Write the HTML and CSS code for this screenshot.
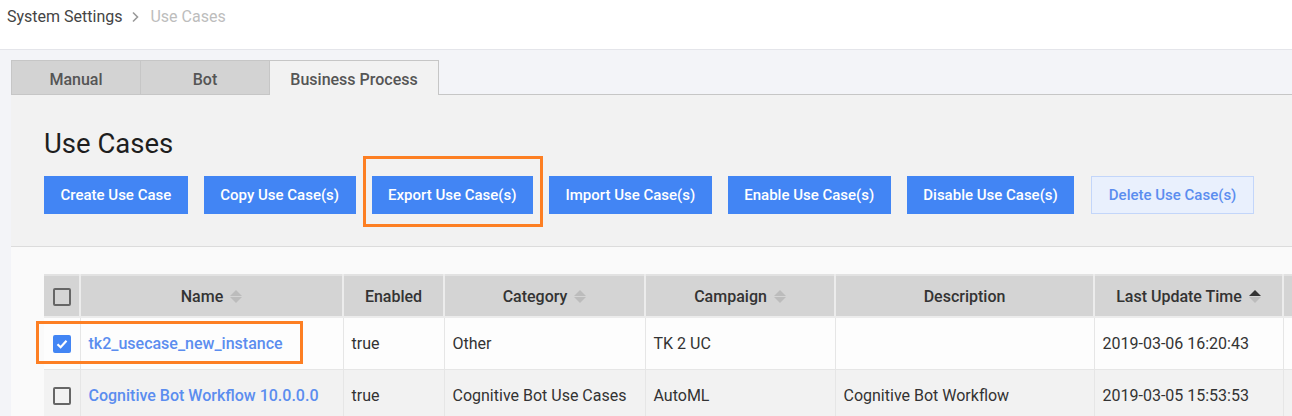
FILE: index.html
```html
<!DOCTYPE html>
<html lang="en">
<head>
    <meta charset="UTF-8">
    <meta name="viewport" content="width=device-width, initial-scale=1.0">
    <title>Use Cases</title>
    <link rel="stylesheet" href="styles.css">
</head>
<body>
    <div class="topbar">
        <span class="crumb">System Settings</span>
        <svg class="crumb-sep" width="10" height="12" viewBox="0 0 10 12"><path d="M3 1.5 L7.5 6 L3 10.5" fill="none" stroke="#9a9a9a" stroke-width="1.6"/></svg>
        <span class="crumb current">Use Cases</span>
    </div>

    <div class="main">
        <ul class="tabs">
            <li class="tab tab-manual">Manual</li>
            <li class="tab tab-bot">Bot</li>
            <li class="tab active">Business Process</li>
        </ul>

        <div class="panel">
            <div class="panel-head">
                <h2>Use Cases</h2>
                <div class="actions">
                    <button class="btn">Create Use Case</button>
                    <button class="btn">Copy Use Case(s)</button>
                    <span class="marked"><button class="btn">Export Use Case(s)</button></span>
                    <button class="btn">Import Use Case(s)</button>
                    <button class="btn">Enable Use Case(s)</button>
                    <button class="btn">Disable Use Case(s)</button>
                    <button class="btn btn-light">Delete Use Case(s)</button>
                </div>
            </div>

            <div class="panel-body">
                <div class="table-wrap">
                    <table class="grid">
                        <colgroup>
                            <col style="width:36px">
                            <col style="width:263px">
                            <col style="width:101px">
                            <col style="width:201px">
                            <col style="width:190px">
                            <col style="width:259px">
                            <col style="width:189px">
                            <col style="width:120px">
                        </colgroup>
                        <thead>
                            <tr>
                                <th><span class="check"></span></th>
                                <th>Name <span class="sort"><i class="up"></i><i class="down"></i></span></th>
                                <th>Enabled</th>
                                <th>Category <span class="sort"><i class="up"></i><i class="down"></i></span></th>
                                <th>Campaign <span class="sort"><i class="up"></i><i class="down"></i></span></th>
                                <th>Description</th>
                                <th>Last Update Time <span class="sort asc"><i class="up"></i><i class="down"></i></span></th>
                                <th></th>
                            </tr>
                        </thead>
                        <tbody>
                            <tr>
                                <td><span class="check checked"><svg width="14" height="14" viewBox="0 0 14 14"><path d="M2.5 7.2 L5.6 10.2 L11.5 3.8" fill="none" stroke="#fff" stroke-width="2.2"/></svg></span></td>
                                <td><a href="#">tk2_usecase_new_instance</a></td>
                                <td>true</td>
                                <td>Other</td>
                                <td>TK 2 UC</td>
                                <td></td>
                                <td>2019-03-06 16:20:43</td>
                                <td></td>
                            </tr>
                            <tr class="alt">
                                <td><span class="check"></span></td>
                                <td><a href="#">Cognitive Bot Workflow 10.0.0.0</a></td>
                                <td>true</td>
                                <td>Cognitive Bot Use Cases</td>
                                <td>AutoML</td>
                                <td>Cognitive Bot Workflow</td>
                                <td>2019-03-05 15:53:53</td>
                                <td></td>
                            </tr>
                        </tbody>
                    </table>
                    <div class="name-mark"></div>
                </div>
            </div>
        </div>
    </div>
</body>
</html>
```

FILE: styles.css
```css
html, body {
    margin: 0;
    padding: 0;
}
body {
    font-family: Roboto, "Liberation Sans", Arial, sans-serif;
    background-color: #f3f4f8;
    color: #333;
    width: 1292px;
    height: 416px;
    overflow: hidden;
}
.topbar {
    height: 50px;
    background: #fff;
    border-bottom: 1px solid #e4e5ea;
    display: flex;
    align-items: flex-start;
    padding: 7px 0 0 7px;
    box-sizing: border-box;
    font-size: 16px;
}
.crumb {
    color: #444;
    line-height: 20px;
}
.crumb.current {
    color: #bdbdbd;
}
.crumb-sep {
    margin: 4px 10px 0 8px;
}
.main {
    padding: 10px 0 0 11px;
}
.tabs {
    list-style: none;
    margin: 0;
    padding: 0;
    display: flex;
    height: 34px;
    border-bottom: 1px solid #c6c6c6;
    box-sizing: content-box;
}
.tab {
    background: #d3d3d3;
    border: 1px solid #c6c6c6;
    border-bottom: 0;
    height: 34px;
    box-sizing: border-box;
    font-size: 16px;
    font-weight: 500;
    color: #555;
    display: flex;
    align-items: center;
    justify-content: center;
    padding-top: 3px;
    margin-right: -1px;
}
.tab-manual {
    width: 130px;
}
.tab-bot {
    width: 130px;
}
.tab.active {
    width: 170px;
    background: #f2f2f2;
    height: 35px;
    margin-bottom: -1px;
}
.panel {
    background: #f2f2f2;
}
.panel-head {
    padding: 32px 0 0 33px;
    height: 152px;
    box-sizing: border-box;
    border-bottom: 1px solid #dcdcdc;
}
.panel-head h2 {
    margin: 0;
    font-size: 27.5px;
    font-weight: 400;
    color: #1e1e1e;
    line-height: 34px;
}
.actions {
    display: flex;
    gap: 16px;
    margin-top: 15px;
}
.btn {
    font-family: inherit;
    font-size: 15px;
    font-weight: 500;
    height: 38px;
    padding: 0 16.5px;
    border: 0;
    background: #4285f4;
    color: #fff;
    cursor: pointer;
    white-space: nowrap;
}
.btn-light {
    background: #e9f0fd;
    color: #5b8def;
    border: 1px solid #c3d6fa;
    margin-left: 1px;
}
/* orange call-out frame around a button */
.marked {
    position: relative;
    display: flex;
}
.marked::after {
    content: "";
    position: absolute;
    top: -20px;
    left: -9px;
    right: -10px;
    bottom: -13px;
    border: 3px solid #fd7f23;
    pointer-events: none;
}
.panel-body {
    background: #fafafa;
    padding: 27px 0 0 33px;
    height: 200px;
}
.table-wrap {
    position: relative;
}
.grid {
    border-collapse: collapse;
    table-layout: fixed;
    width: 1359px;
    font-size: 16px;
    border-top: 2px solid #e2e2e2;
}
.grid th {
    background: #d4d4d4;
    font-weight: 500;
    color: #333;
    height: 40px;
    border-left: 2px solid #ececec;
    border-bottom: 2px solid #ececec;
    padding: 0;
    white-space: nowrap;
}
.grid th:first-child,
.grid td:first-child {
    border-left: 0;
    text-align: center;
}
.grid td {
    height: 51px;
    padding: 0 0 0 8px;
    border-left: 1px solid #e6e6e6;
    border-bottom: 1px solid #e6e6e6;
    color: #333;
    white-space: nowrap;
    overflow: hidden;
}
.grid td:first-child {
    padding: 0;
}
.grid tbody tr {
    background: #fdfdfd;
}
.grid tbody tr.alt {
    background: #f2f2f2;
}
.grid a {
    color: #5b8def;
    font-weight: 500;
    text-decoration: none;
}
.check {
    display: inline-flex;
    align-items: center;
    justify-content: center;
    width: 18px;
    height: 18px;
    border: 2px solid #666;
    border-radius: 2px;
    box-sizing: border-box;
    vertical-align: middle;
}
.check.checked {
    background: #4285f4;
    border-color: #4285f4;
}
.sort {
    display: inline-flex;
    flex-direction: column;
    gap: 1px;
    vertical-align: middle;
    margin-left: 3px;
    margin-top: -2px;
}
.sort i {
    width: 0;
    height: 0;
    border-left: 6px solid transparent;
    border-right: 6px solid transparent;
}
.sort .up {
    border-bottom: 6px solid #bcbcbc;
}
.sort .down {
    border-top: 6px solid #bcbcbc;
}
.sort.asc .up {
    border-bottom-color: #333;
}
.name-mark {
    position: absolute;
    left: -8px;
    top: 47px;
    width: 267px;
    height: 43px;
    border: 3px solid #fd7f23;
    box-sizing: border-box;
    pointer-events: none;
}
```
